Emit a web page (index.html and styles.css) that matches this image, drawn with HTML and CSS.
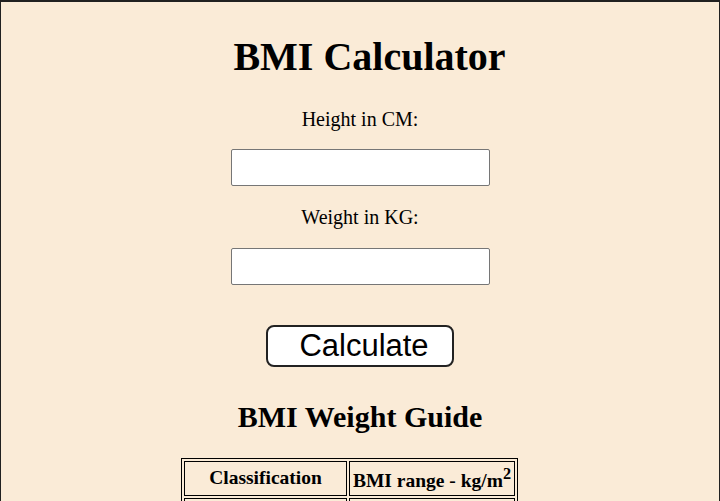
FILE: index.html
```html
<!DOCTYPE html>
<html>
<head>
<meta charset="utf-8">
<link rel="stylesheet" href="styles.css">
</head>
<body>
<div class="page">
  <h1 class="title">BMI Calculator</h1>
  <p class="label label-first">Height in CM:</p>
  <input class="field" type="text">
  <p class="label label-second">Weight in KG:</p>
  <input class="field field-second" type="text">
  <button class="calc">Calculate</button>
  <h2 class="guide">BMI Weight Guide</h2>
  <table class="bmi">
    <tr><th class="c1">Classification</th><th class="c2">BMI range - kg/m<sup>2</sup></th></tr>
    <tr><td>Underweight</td><td>&lt; 18.5</td></tr>
    <tr><td>Normal</td><td>18.5 - 25</td></tr>
  </table>
</div>
</body>
</html>
```
FILE: styles.css
```css
html, body {
  margin: 0;
  padding: 0;
  background: #202020;
  height: 100%;
}
.page {
  margin: 2px 1px 0 1px;
  background: #faebd7;
  min-height: 100%;
  font-family: "Liberation Serif", serif;
  color: #000;
  display: flex;
  flex-direction: column;
  align-items: center;
  overflow: hidden;
}
.title {
  font-size: 40px;
  margin: 32px 0 0 19px;
  line-height: 46px;
}
.label {
  font-size: 20px;
  margin: 0;
  line-height: 22px;
}
.label-first { margin-top: 28px; }
.label-second { margin-top: 20px; }
.field {
  width: 259px;
  height: 37px;
  box-sizing: border-box;
  margin-top: 19px;
  border: 1px solid #767676;
  border-radius: 2px;
  background: #fff;
}
.field-second { margin-top: 20px; }
.calc {
  margin-top: 40px;
  width: 188px;
  height: 42px;
  box-sizing: border-box;
  background: #fff;
  border: 2px solid #222;
  border-radius: 8px;
  font-family: "Liberation Sans", sans-serif;
  font-size: 31px;
  line-height: 36px;
  color: #000;
  padding: 0 0 0 8px;
}
.guide {
  font-size: 30px;
  margin: 33px 0 0;
  line-height: 34px;
}
.bmi {
  margin: 24px 21px 0 0;
  width: 337px;
  border: 1px solid #000;
  border-spacing: 2px;
  font-size: 19.5px;
}
.bmi th, .bmi td {
  border: 1px solid #000;
  padding: 3px 1px;
  white-space: nowrap;
}
.c1 { width: 159px; }
```
